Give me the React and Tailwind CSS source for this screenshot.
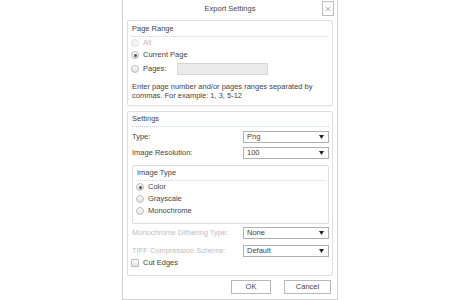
import { X } from "lucide-react";

function Radio({ checked, disabled, label }) {
    return (
        <div className="h-[12px] flex items-center gap-[4px]">
            <span
                className={
                    "w-[8px] h-[8px] rounded-full border flex items-center justify-center " +
                    (disabled
                        ? "border-[#e0e0e0] bg-[#f4f4f4]"
                        : "border-[#bcbcbc] bg-gradient-to-b from-[#fbfbfb] to-[#e2e2e2]")
                }
            >
                {checked && <span className="w-[3px] h-[3px] rounded-full bg-[#555]" />}
            </span>
            <span className={disabled ? "text-[#bdbdbd]" : "text-[#444]"}>{label}</span>
        </div>
    );
}

function Select({ value }) {
    return (
        <div className="w-[86px] h-[12px] border border-[#b0b0b0] bg-white flex items-center justify-between pl-[3px] pr-[4px]">
            <span className="text-[#444] leading-none">{value}</span>
            <svg width="5" height="4" viewBox="0 0 5 4">
                <path d="M0 0h5L2.5 4z" fill="#222" />
            </svg>
        </div>
    );
}

function Row({ label, value, disabled, className = "" }) {
    return (
        <div className={"h-[12px] flex items-center justify-between " + className}>
            <span className={disabled ? "text-[#bdbdbd]" : "text-[#444]"}>{label}</span>
            <Select value={value} />
        </div>
    );
}

export default function App() {
    return (
        <div
            className="w-[460px] h-[300px] bg-white flex justify-center text-[7.5px]"
            style={{ fontFamily: '"Liberation Sans", Arial, sans-serif' }}
        >
            <div className="w-[216px] h-[300px] border border-t-0 border-[#d2d2d2] flex flex-col">
                <div className="relative h-[20px] flex items-center justify-center text-[#444] pb-[2px]">
                    Export Settings
                    <button className="absolute right-[3px] top-[1px] w-[12px] h-[15px] border border-[#bcbcbc] bg-white flex items-center justify-center text-[#666]">
                        <X size={8} strokeWidth={1.5} />
                    </button>
                </div>

                <div className="mx-[4px] h-[86px] border border-[#dedede] rounded-[2px] pl-[3px] pr-[4px] flex flex-col">
                    <div className="h-[16px] flex items-center pl-[1px] text-[#444] border-b border-dotted border-[#c6d6e6]">
                        Page Range
                    </div>
                    <Radio disabled label="All" />
                    <Radio checked label="Current Page" />
                    <div className="h-[16px] flex items-center">
                        <Radio label="Pages:" />
                        <div className="ml-[11px] w-[91px] h-[12px] bg-[#ebebeb] border border-[#d6d6d6]" />
                    </div>
                    <p className="mt-[5px] leading-[9px] text-[#444] pl-[1px]">
                        Enter page number and/or pages ranges separated by commas. For example: 1, 3, 5-12
                    </p>
                </div>

                <div className="mx-[4px] mt-[5px] h-[165px] border border-[#dedede] rounded-[2px] pl-[4px] pr-[3px] flex flex-col">
                    <div className="h-[15px] flex items-center text-[#444] border-b border-dotted border-[#c6d6e6]">
                        Settings
                    </div>
                    <Row className="mt-[4px]" label="Type:" value="Png" />
                    <Row className="mt-[4px]" label="Image Resolution:" value="100" />

                    <div className="mt-[6px] h-[59px] border border-[#dedede] rounded-[2px] px-[3px] flex flex-col">
                        <div className="h-[15px] flex items-center pl-[1px] text-[#444] border-b border-dotted border-[#c6d6e6]">
                            Image Type
                        </div>
                        <Radio checked label="Color" />
                        <Radio label="Grayscale" />
                        <Radio label="Monochrome" />
                    </div>

                    <Row className="mt-[3px]" disabled label="Monochrome Dithering Type:" value="None" />
                    <Row className="mt-[6px]" disabled label="TIFF Compression Scheme:" value="Default" />
                    <div className="h-[12px] flex items-center gap-[4px] -ml-[1px]">
                        <span className="w-[8px] h-[8px] border border-[#bcbcbc] rounded-[1px] bg-gradient-to-b from-[#fbfbfb] to-[#e2e2e2]" />
                        <span className="text-[#444]">Cut Edges</span>
                    </div>
                </div>

                <div className="mt-[4px] pr-[6px] flex justify-end gap-[13px]">
                    <button className="w-[40px] h-[14px] border border-[#b8b8b8] bg-white text-[#444] text-[7.5px] leading-none">
                        OK
                    </button>
                    <button className="w-[47px] h-[14px] border border-[#b8b8b8] bg-white text-[#444] text-[7.5px] leading-none">
                        Cancel
                    </button>
                </div>
            </div>
        </div>
    );
}
